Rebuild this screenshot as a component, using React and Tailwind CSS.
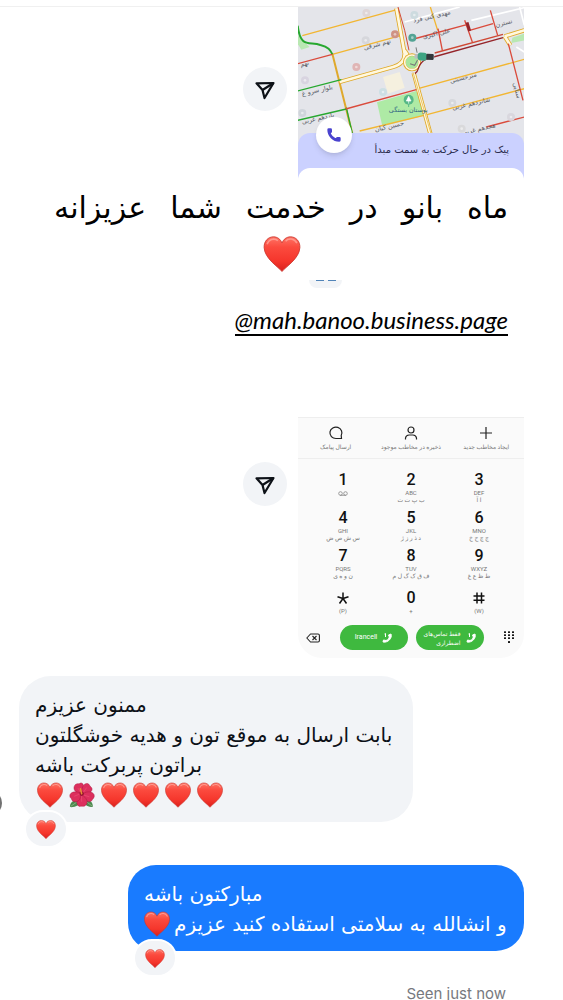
import { useId } from 'react'
import { Phone } from 'lucide-react'

const keys = [
  { digit: '1', latin: 'ꝏ', persian: '' },
  { digit: '2', latin: 'ABC', persian: 'ب پ ت ث' },
  { digit: '3', latin: 'DEF', persian: 'ا آ' },
  { digit: '4', latin: 'GHI', persian: 'س ش ص ض' },
  { digit: '5', latin: 'JKL', persian: 'د ذ ر ز ژ' },
  { digit: '6', latin: 'MNO', persian: 'ج چ ح خ' },
  { digit: '7', latin: 'PQRS', persian: 'ن و ه ی' },
  { digit: '8', latin: 'TUV', persian: 'ف ق ک گ ل م' },
  { digit: '9', latin: 'WXYZ', persian: 'ط ظ ع غ' },
  { digit: '*', latin: '(P)', persian: '' },
  { digit: '0', latin: '+', persian: '' },
  { digit: '#', latin: '(W)', persian: '' },
]

const titleWords = ['ماه', 'بانو', 'در', 'خدمت', 'شما', 'عزیزانه']

const Heart = ({ className }) => {
  const id = useId()
  return (
    <svg viewBox="0 0 36 35" className={className} role="img" aria-label="heart">
      <defs>
        <linearGradient id={id} x1="0" y1="0" x2="0" y2="1">
          <stop offset="0" stopColor="#ff7365" />
          <stop offset="0.3" stopColor="#fb4a3e" />
          <stop offset="0.7" stopColor="#f5362c" />
          <stop offset="1" stopColor="#d9201d" />
        </linearGradient>
      </defs>
      <path
        d="M18 34.5C15 30.5 1 22 .6 11.2C.4 5 4.600 .8 9.600 .8C13.500 .8 16.500 3 18 6.800C19.500 3 22.500 .8 26.400 .8C31.400 .8 35.600 5 35.400 11.200C35 22 21 30.500 18 34.500Z"
        fill={`url(#${id})`}
        stroke="#c9362d"
        strokeWidth="0.8"
      />
      <path d="M3.500 8C5 3.500 10 1.500 14 4.500" fill="none" stroke="#ffada2" strokeWidth="1.500" opacity="0.700" />
      <path d="M21.500 5C24.500 1.500 30 2.500 32.500 7" fill="none" stroke="#ffada2" strokeWidth="1.500" opacity="0.700" />
    </svg>
  )
}

const Flower = ({ className }) => (
  <svg viewBox="0 0 84 84" className={className} role="img" aria-label="hibiscus">
    <path d="M3 81C3 66 12 60 27 60L30 74C20 80 12 82 3 81Z" fill="#4d8a50" />
    <path d="M77 80C77 66 70 59 57 58L52 73C60 79 68 82 77 80Z" fill="#4d8a50" />
    <path d="M5 79L25 65M75 78L58 65" stroke="#a6c59a" strokeWidth="2" />
    <g fill="#dc2f5d" stroke="#a9183f" strokeWidth="1.500">
      <path d="M38 36C20 36 12 22 18 12C23 2 32 8 36 4C44 0 52 12 44 30Z" />
      <path d="M42 32C41 15 49 3 60 5C66 6 66 13 71 16C80 24 72 38 47 40Z" />
      <path d="M46 38C58 28 77 31 81 41C84 51 76 54 74 60C66 68 52 63 44 44Z" />
      <path d="M42 42C58 51 63 67 54 75C47 82 41 76 34 79C24 76 21 61 36 42Z" />
      <path d="M38 40C38 58 28 67 15 63C8 61 10 54 4 50C-2 38 12 26 36 35Z" />
    </g>
    <path d="M40 36L29 20M45 35L57 18M47 42L66 48M40 43L41 64M35 39L17 46" stroke="#ee5078" strokeWidth="2" />
    <circle cx="41" cy="38" r="7" fill="#96122f" />
    <path d="M41 38L37 22" stroke="#e78b38" strokeWidth="5" strokeLinecap="round" />
  </svg>
)

const SendButton = () => (
  <button
    type="button"
    aria-label="Forward"
    className="flex size-11 shrink-0 items-center justify-center rounded-full bg-[#f2f4f7]"
  >
    <svg viewBox="0 0 22 24" className="h-6 w-[22px]" fill="none" stroke="#0d1117" strokeWidth="2.2" strokeLinejoin="round" aria-hidden="true">
      <path d="M2.500 6.300L19.500 6L10.500 21L8.500 13Z" />
      <path d="M8.500 13L19.500 6" />
    </svg>
  </button>
)

const MapPin = ({ x, y, color }) => (
  <g>
    <circle cx={x} cy={y} r="12" fill={color} />
    <circle cx={x} cy={y} r="4" fill="#fff" opacity="0.500" />
  </g>
)

const CityMap = () => (
  <svg viewBox="24 20 680 414" preserveAspectRatio="xMidYMin slice" className="block h-[138px] w-full" role="img" aria-label="Courier map">
    <rect x="24" y="20" width="680" height="414" fill="#e4e5ea" />
    {/* parks */}
    <path d="M262 306L380 272L410 344L278 378Z" fill="#aeeaa5" />
    <path d="M24 105L60 140L35 148L24 130Z" fill="#b9e8b2" />
    <path d="M668 112L704 100V120L665 128Z" fill="#b9e8b2" />
    <path d="M280 230L330 215L345 262L295 280Z" fill="#f5f0df" />
    {/* side streets */}
    <g stroke="#fff" strokeWidth="5" fill="none">
      <path d="M345 65L510 20M545 60L704 22M690 20L704 75M680 140L704 155" />
    </g>
    <g fill="none" strokeWidth="4" stroke="#f2b632">
      <path d="M38 106L322 28M128 162L335 105M385 265L704 177M415 342L704 265M210 392L415 342M422 20L444 90" />
      <path d="M128 160L188 400" strokeWidth="6" stroke="#dfa92c" />
    </g>
    {/* boulevards */}
    <g fill="none" strokeWidth="13" stroke="#e0a926">
      <path d="M150 245L310 200Q345 190 345 160L320 24M345 150L365 182M372 218L422 400" />
      <path d="M645 108L662 135M645 108L704 90" />
    </g>
    <g fill="none" strokeWidth="8" stroke="#fff8df">
      <path d="M150 245L310 200Q345 190 345 160L320 24M345 150L365 182M372 218L422 400" />
      <path d="M645 108L662 135M645 108L704 90" />
    </g>
    <path d="M370 216L424 400" stroke="#e0a926" strokeWidth="2" />
    <circle cx="367" cy="186" r="23" fill="#a8e59d" stroke="#e0a926" strokeWidth="8" />
    <circle cx="367" cy="186" r="22" fill="none" stroke="#fff8df" strokeWidth="5" />
    {/* traffic */}
    <g fill="none" stroke="#27a82f" strokeWidth="6">
      <path d="M24 76C32 145 60 122 92 134C116 140 122 148 128 162" />
      <path d="M24 272L155 238M24 360L170 326" strokeWidth="4" />
      <path d="M170 322L188 400" strokeWidth="4" />
    </g>
    <g fill="none" stroke="#da4b3c" strokeWidth="4">
      <path d="M24 190L128 162M168 326L380 268M372 116L534 72M540 90L610 70M525 60L548 125M602 30L624 105M445 85L458 150M590 380L704 350M656 130L700 300" />
    </g>
    <path d="M325 20L345 90L358 150" fill="none" stroke="#d34b33" strokeWidth="3" />
    <g fill="none" stroke="#95252b" strokeWidth="4">
      <path d="M376 220C392 212 378 192 410 176L640 112" />
      <path d="M435 158L640 102" stroke="#cf4834" />
      <path d="M532 66L540 92" strokeWidth="9" />
    </g>
    <MapPin x="368" y="112" color="#53a394" />
    <MapPin x="316" y="102" color="#cf9284" />
    <MapPin x="200" y="200" color="#e0b5b5" />
    <MapPin x="374" y="44" color="#cddbdf" />
    <MapPin x="230" y="38" color="#dfd6d7" />
    <MapPin x="228" y="120" color="#d6d7dc" />
    <MapPin x="488" y="308" color="#d6d8dc" />
    <MapPin x="280" y="275" color="#cddfe4" />
    <MapPin x="46" y="240" color="#d8d4e0" />
    <MapPin x="38" y="338" color="#d0d5db" />
    <MapPin x="516" y="385" color="#d9d9db" />
    <MapPin x="664" y="350" color="#d9d7de" />
    <circle cx="357" cy="298" r="15" fill="#56b887" />
    <path d="M357 288L350 302H364ZM357 300V310" fill="#fff" stroke="#fff" strokeWidth="2" />
    <path d="M357 312V320" stroke="#56b887" strokeWidth="3" />
    <g fill="#565a64" textAnchor="middle" className="font-['DejaVu_Sans'] text-[19px]">
      <text transform="translate(428 54) rotate(-13)">مهدی کنی فرد</text>
      <text transform="translate(442 106) rotate(-13)">علی اکبری</text>
      <text transform="translate(264 138) rotate(-15)">نهم شرقی</text>
      <text transform="translate(46 196) rotate(-13)">نهم</text>
      <text transform="translate(84 276) rotate(-13)">بلوار سرو غ</text>
      <text transform="translate(86 360) rotate(-13)">یازدهم غربی</text>
      <text transform="translate(522 238) rotate(-15)">میرحسینی</text>
      <text transform="translate(546 316) rotate(-13)">شانزدهم غربی</text>
      <text transform="translate(300 384) rotate(-13)">حسین کیان</text>
      <text transform="translate(568 392) rotate(-13)">هجدهم غربی</text>
      <text transform="translate(644 74) rotate(-15)">نسترن</text>
      <text transform="translate(676 272) rotate(75)">سنایی</text>
      <text x="356" y="336" fill="#2c5f83">بوستان بستگی</text>
    </g>
    {/* courier */}
    <g transform="rotate(2 405 168)">
      <rect x="374" y="162" width="60" height="14" rx="6" fill="#b9bec0" />
      <rect x="384" y="157" width="28" height="24" rx="9" fill="#3fa483" />
      <rect x="410" y="160" width="22" height="18" rx="3" fill="#34373b" />
      <path d="M378 142L382 158M362 192L376 196L384 180" stroke="#777" strokeWidth="3" fill="none" />
    </g>
  </svg>
)

const TripCard = () => (
  <section className="w-[226px] overflow-hidden">
    <CityMap />
    <div className="relative -mt-3 rounded-t-xl bg-[#cbd1ff]">
      <button
        type="button"
        aria-label="Call courier"
        className="absolute -top-4 left-[18px] flex size-9 items-center justify-center rounded-full bg-white shadow-md"
      >
        <Phone size={16} fill="#4a43cf" strokeWidth={0} />
      </button>
      <p dir="rtl" className="h-[35px] pr-[15px] text-[10px] leading-[34px] text-[#2c2d4d]">
        پیک در حال حرکت به سمت مبدأ
      </p>
      <div className="h-3 rounded-t-xl bg-white" />
    </div>
  </section>
)

const ActionButton = ({ label, children }) => (
  <button type="button" className="flex flex-col items-center gap-[2px]">
    <svg viewBox="0 0 16 16" className="size-4" fill="none" stroke="#222" strokeWidth="1.2" aria-hidden="true">
      {children}
    </svg>
    <span dir="rtl" className="text-[6px] leading-2 whitespace-nowrap text-[#777]">{label}</span>
  </button>
)

const Handset = () => (
  <svg viewBox="0 0 12 12" className="size-3 shrink-0" fill="none" aria-hidden="true">
    <path d="M10 2C11.500 6 7 11 2 10L2.500 8L5 8.500C7 8 8 6.500 8.300 5L7.500 3Z" fill="#fff" stroke="#fff" strokeLinejoin="round" />
    <path d="M3.500 2L4.500 1.500V5" stroke="#fff" />
  </svg>
)

const Dialer = () => (
  <section className="w-[226px] rounded-b-3xl border-t border-[#eee] bg-[#fafafa] font-['Roboto','DejaVu_Sans',sans-serif]">
    <div className="grid h-[41px] grid-cols-3 border-b border-[#eee] pt-[7px]">
      <ActionButton label="ارسال پیامک">
        <path d="M13.500 13.500H8A6 5.700 0 1 1 13.200 10.500Z" />
      </ActionButton>
      <ActionButton label="ذخیره در مخاطب موجود">
        <circle cx="8" cy="5" r="3" />
        <path d="M2.500 14.500V13Q3 10 6 10H10Q13 10 13.500 13V14.500" />
      </ActionButton>
      <ActionButton label="ایجاد مخاطب جدید">
        <path d="M8 2V14M2 8H14" />
      </ActionButton>
    </div>
    <div className="grid grid-cols-3 gap-y-px px-[11px] pt-3">
      {keys.map(({ digit, latin, persian }) => (
        <button key={digit} type="button" className="flex h-[37px] flex-col items-center last:h-8 nth-[n+10]:pt-1">
          <span className="flex h-[18px] items-center text-base leading-[18px] font-medium text-[#111]">
            {digit === '*' || digit === '#' ? (
              <svg viewBox="0 0 12 12" className="size-3" stroke="#111" strokeWidth="1.500" role="img" aria-label={digit}>
                {digit === '*' ? (
                  <path d="M6 6.500V0.500M6 6.500L0.500 4.700M6 6.500L11.500 4.700M6 6.500L2.500 11.500M6 6.500L9.500 11.500" />
                ) : (
                  <path d="M4 0.500V11.500M8.500 0.500V11.500M0.500 4H11.500M0.500 8.200H11.500" />
                )}
              </svg>
            ) : (
              digit
            )}
          </span>
          {digit === '1' ? (
            <svg viewBox="0 0 10 6" className="mt-[2px] h-[6px] w-[10px]" fill="none" stroke="#888" strokeWidth="0.8" role="img" aria-label="voicemail">
              <circle cx="2.500" cy="2.500" r="1.800" />
              <circle cx="7.500" cy="2.500" r="1.800" />
              <path d="M2 4.300H8" />
            </svg>
          ) : (
            <span className="text-[6px] leading-2 text-[#777]">{latin}</span>
          )}
          {persian && (
            <span dir="rtl" className="text-[6px] leading-[6px] whitespace-nowrap text-[#777]">{persian}</span>
          )}
        </button>
      ))}
    </div>
    <div className="flex items-center justify-between pt-[3px] pr-[10px] pb-2 pl-2">
      <button type="button" aria-label="Backspace">
        <svg viewBox="0 0 14 10" className="h-[10px] w-[14px]" fill="none" stroke="#222" strokeWidth="1.1" strokeLinejoin="round" aria-hidden="true">
          <path d="M4.500 1H12Q13.400 1 13.400 2.400V7.600Q13.400 9 12 9H4.500L0.800 5Z" />
          <path d="M6.500 3L10.500 7M10.500 3L6.500 7" />
        </svg>
      </button>
      <div className="flex gap-2">
        <button type="button" className="flex h-[25px] w-[68px] items-center justify-center gap-1 rounded-full bg-[#3fb93f] text-[7px] text-white">
          Irancell
          <Handset />
        </button>
        <button type="button" className="flex h-[25px] w-[68px] items-center justify-center gap-1 rounded-full bg-[#3fb93f] text-[6px] leading-[9px] text-white">
          <span dir="rtl" className="text-right">
            فقط تماس‌های
            <br />
            اضطراری
          </span>
          <Handset />
        </button>
      </div>
      <button type="button" aria-label="Keypad">
        <svg viewBox="0 0 10 13" className="h-[13px] w-[10px]" fill="#111" aria-hidden="true">
          {[1, 4, 7].map((y) => [1, 5, 9].map((x) => <rect key={`${x}-${y}`} x={x - 1} y={y - 0.8} width="2" height="1.800" rx="0.500" />))}
          <rect x="4" y="10" width="2" height="2" rx="0.500" />
        </svg>
      </button>
    </div>
  </section>
)

const Reaction = () => (
  <button
    type="button"
    aria-label="Heart reaction"
    className="absolute top-full left-[5px] -mt-3 flex h-[38px] w-11 items-center justify-center rounded-full border-2 border-white bg-[#f2f4f7]"
  >
    <Heart className="h-[19px] w-5" />
  </button>
)

const App = () => (
  <main className="relative overflow-hidden bg-white pt-[6px] font-['DejaVu_Sans',sans-serif]">
    <div className="border-t border-[#f0f0f0] pr-[39px] pl-[19px]">
      <div className="flex items-start justify-end gap-[11px]">
        <div className="pt-[60px]">
          <SendButton />
        </div>
        <TripCard />
      </div>

      <h1 dir="rtl" className="mt-1 flex h-12 items-center justify-between pr-4 pl-[35px] text-[30px] leading-[48px] text-black">
        {titleWords.map((word) => (
          <span key={word}>{word}</span>
        ))}
      </h1>
      <div className="mt-1 flex h-9 justify-center pl-5">
        <Heart className="h-9 w-[38px]" />
      </div>
      <div className="mt-2 mr-[182px] ml-auto flex h-2 w-[33px] justify-center gap-1 rounded-b-full bg-[#f2f4f7]">
        <span className="h-px w-2 bg-[#5184b8]" />
        <span className="h-px w-2 bg-[#5184b8]" />
      </div>
      <div className="mt-[18px] flex justify-end pr-4">
        <a href="#page" className="border-b-2 border-black font-['Lato','Open_Sans',sans-serif] text-2xl leading-7 text-black italic">
          @mah.banoo.business.page
        </a>
      </div>

      <div className="mt-[81px] flex items-start justify-end gap-[11px]">
        <div className="pt-[45px]">
          <SendButton />
        </div>
        <Dialer />
      </div>

      <article className="relative mt-[18px] w-[394px] rounded-[32px] bg-[#f2f4f7] px-4 pt-[14px] pb-3 text-xl leading-[30px] text-[#0d1117]">
        <p dir="rtl" className="text-left whitespace-nowrap">
          ممنون عزیزم
          <br />
          بابت ارسال به موقع تون و هدیه خوشگلتون
          <br />
          براتون پربرکت باشه
        </p>
        <div className="flex h-[30px] items-center gap-[6px] pl-[2px]">
          <Heart className="size-[26px]" />
          <Flower className="size-[26px]" />
          <Heart className="size-[26px]" />
          <Heart className="size-[26px]" />
          <Heart className="size-[26px]" />
          <Heart className="size-[26px]" />
        </div>
        <Reaction />
      </article>

      <article className="relative mt-[43px] ml-auto w-[396px] rounded-[28px] bg-[#197bff] px-4 pt-[14px] pb-3 text-xl leading-[30px] text-white">
        <p dir="rtl" className="text-left whitespace-nowrap">مبارکتون باشه</p>
        <p dir="rtl" className="flex items-center justify-end gap-1 whitespace-nowrap">
          <span>و انشالله به سلامتی استفاده کنید عزیزم</span>
          <Heart className="size-[26px]" />
        </p>
        <Reaction />
      </article>
      <p className="mt-[35px] pr-[18px] text-right font-['Inter',sans-serif] text-[15px] leading-4 text-[#77797e]">Seen just now</p>
    </div>
    <span className="absolute top-[790px] -left-6 size-[26px] rounded-full bg-[#717171]" />
  </main>
)

export default App
